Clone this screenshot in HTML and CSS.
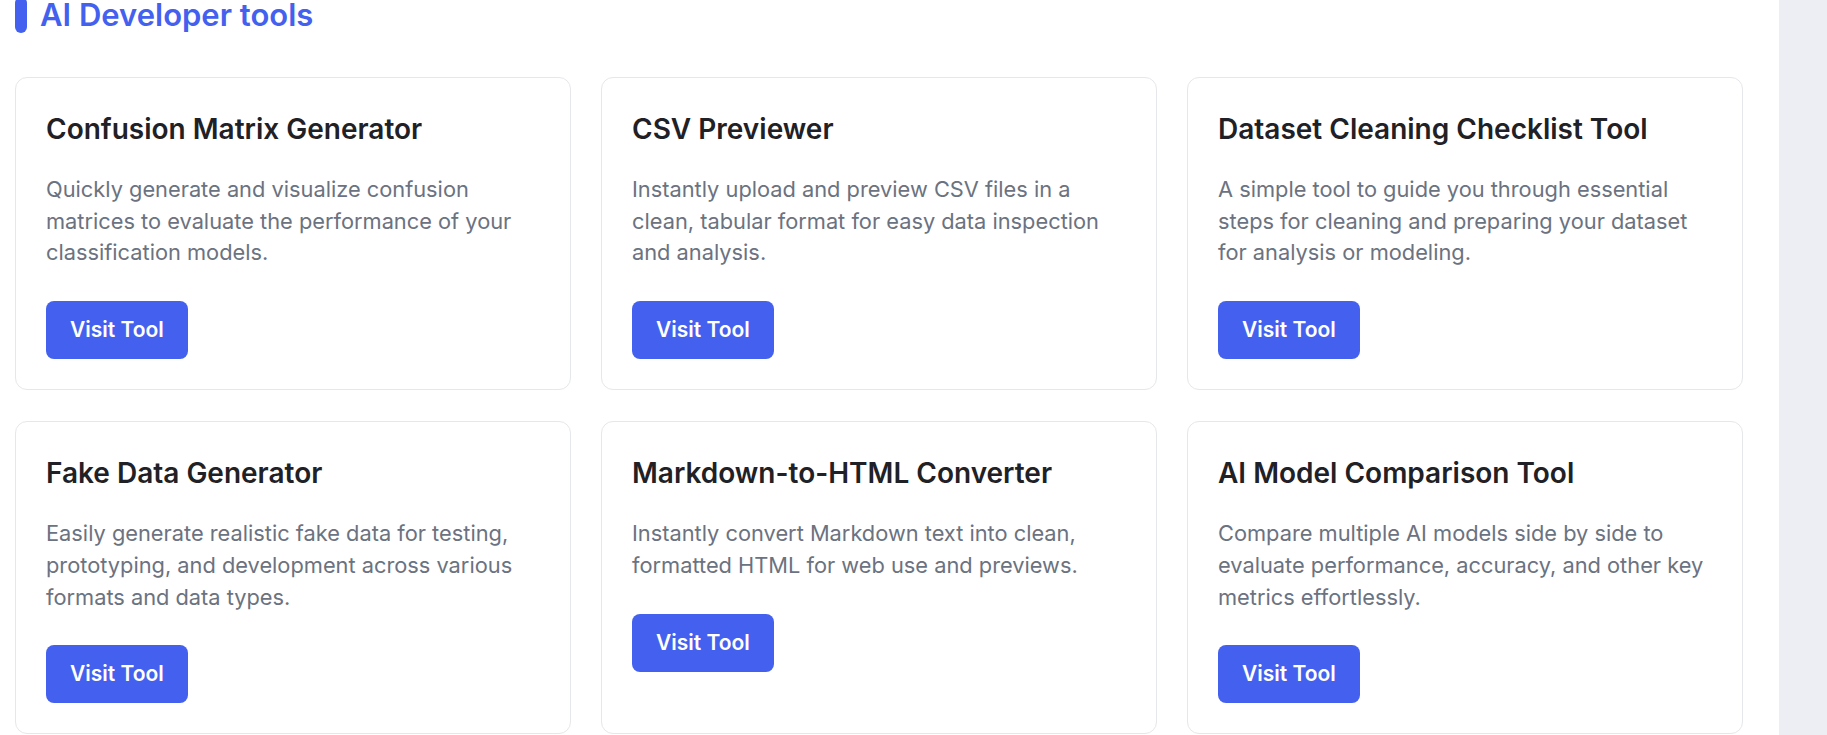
FILE: index.html
```html
<!DOCTYPE html>
<html lang="en">
<head>
<meta charset="utf-8">
<title>AI Developer tools</title>
<link rel="stylesheet" href="styles.css">
</head>
<body>
<div class="page">
  <main class="main">
    <section class="section">
      <h2 class="section-title"><span class="bar"></span>AI Developer tools</h2>
      <div class="grid">
        <article class="card">
          <h3 class="card-title">Confusion Matrix Generator</h3>
          <p class="card-desc">Quickly generate and visualize confusion matrices to evaluate the performance of your classification models.</p>
          <a class="btn" href="#">Visit Tool</a>
        </article>
        <article class="card">
          <h3 class="card-title">CSV Previewer</h3>
          <p class="card-desc">Instantly upload and preview CSV files in a clean, tabular format for easy data inspection and analysis.</p>
          <a class="btn" href="#">Visit Tool</a>
        </article>
        <article class="card">
          <h3 class="card-title">Dataset Cleaning Checklist Tool</h3>
          <p class="card-desc">A simple tool to guide you through essential steps for cleaning and preparing your dataset for analysis or modeling.</p>
          <a class="btn" href="#">Visit Tool</a>
        </article>
        <article class="card">
          <h3 class="card-title">Fake Data Generator</h3>
          <p class="card-desc">Easily generate realistic fake data for testing, prototyping, and development across various formats and data types.</p>
          <a class="btn" href="#">Visit Tool</a>
        </article>
        <article class="card">
          <h3 class="card-title">Markdown-to-HTML Converter</h3>
          <p class="card-desc">Instantly convert Markdown text into clean, formatted HTML for web use and previews.</p>
          <a class="btn" href="#">Visit Tool</a>
        </article>
        <article class="card">
          <h3 class="card-title">AI Model Comparison Tool</h3>
          <p class="card-desc">Compare multiple AI models side by side to evaluate performance, accuracy, and other key metrics effortlessly.</p>
          <a class="btn" href="#">Visit Tool</a>
        </article>
      </div>
    </section>
  </main>
  <aside class="rail"></aside>
</div>
</body>
</html>
```

FILE: styles.css
```css
html, body {
  margin: 0;
  padding: 0;
  background: #ffffff;
}

body {
  font-family: Inter, "Noto Sans", "Liberation Sans", sans-serif;
  overflow: hidden;
}

.page {
  display: flex;
  height: 735px;
}

.main {
  flex: 1;
  min-width: 0;
  padding: 0 36px 0 15px;
}

.rail {
  width: 48px;
  flex: none;
  background: #edeef3;
}

.section-title {
  display: flex;
  align-items: stretch;
  gap: 13px;
  margin: -3px 0 44px;
  font-size: 31px;
  line-height: 36px;
  font-weight: 600;
  color: #4361ee;
}

.bar {
  width: 12px;
  border-radius: 6px;
  background: #4361ee;
}

.grid {
  display: grid;
  grid-template-columns: repeat(3, 1fr);
  gap: 31px 30px;
}

.card {
  display: flex;
  flex-direction: column;
  align-items: flex-start;
  border: 1px solid #e6e7ea;
  border-radius: 12px;
  padding: 30px;
  background: #ffffff;
}

.card-title {
  margin: 5px 0 28px;
  font-size: 28px;
  line-height: 33px;
  font-weight: 600;
  color: #1f2126;
}

.card-desc {
  margin: 0 0 32px;
  font-size: 21.8px;
  line-height: 31.7px;
  color: #6b7280;
}

.btn {
  display: inline-block;
  padding: 16px 24px;
  font-size: 21px;
  line-height: 26px;
  font-weight: 600;
  color: #ffffff;
  background: #4361ee;
  border-radius: 8px;
  text-decoration: none;
}
```
